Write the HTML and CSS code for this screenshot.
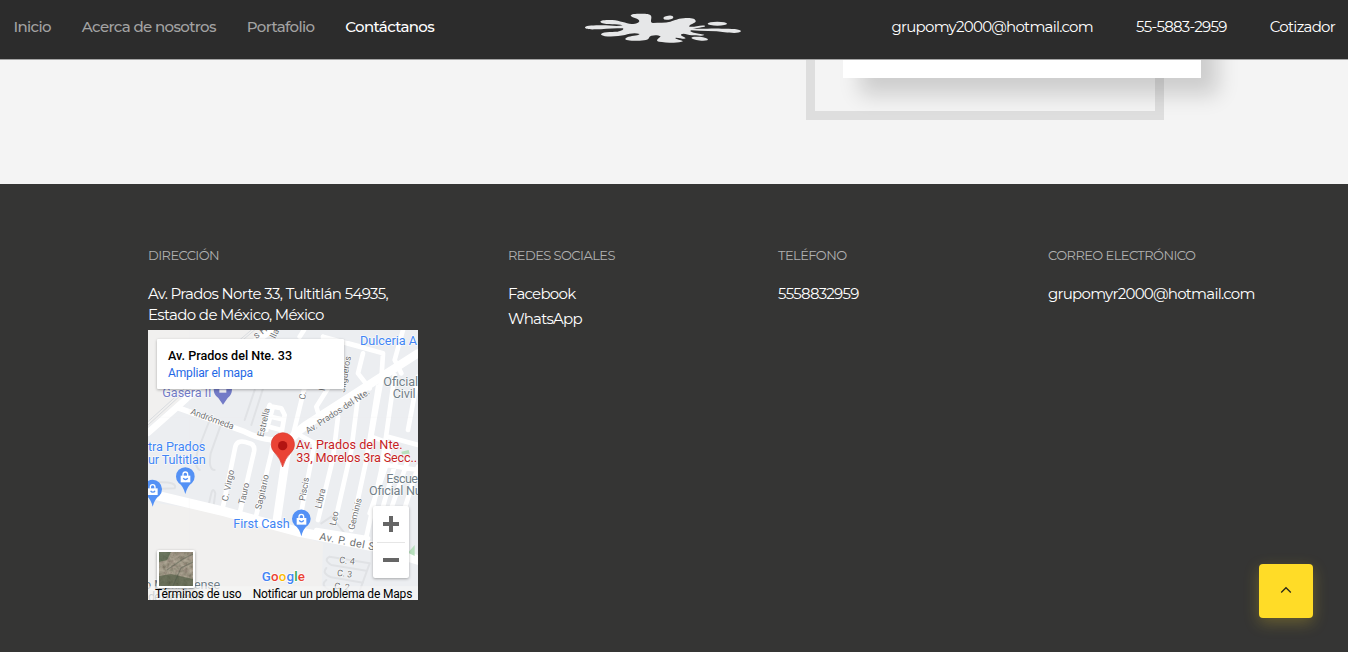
FILE: index.html
```
<!DOCTYPE html>
<html lang="es">
<head>
<meta charset="utf-8">
<title>Contáctanos</title>
<link rel="stylesheet" href="styles.css">
</head>
<body>
<header class="navbar">
  <nav class="menu">
    <a class="link">Inicio</a>
    <a class="link">Acerca de nosotros</a>
    <a class="link">Portafolio</a>
    <a class="link active">Contáctanos</a>
  </nav>
  <svg class="logo" viewBox="0 0 570 177" fill="#e6e7e8">
    <path d="M45 82C50 75 72 77 96 76C119 76 141 81 158 76C142 71 110 75 95 69C82 60 107 59 127 60C151 62 166 70 185 72C194 73 205 71 208 64C208 54 187 55 182 47C182 40 208 41 220 41C234 41 243 43 244 50C245 58 239 68 249 69C266 67 285 69 301 65C318 61 319 57 341 55C359 53 379 55 377 65C372 71 355 74 358 80C374 82 390 74 405 77C409 81 385 83 368 85C390 89 420 84 455 86C483 86 513 86 513 94C508 101 484 99 464 97C433 92 396 94 364 91C352 96 384 101 403 104C397 110 381 106 365 106C353 104 340 98 334 103C328 108 345 110 347 115C342 119 326 112 317 113C312 117 334 119 339 124C327 131 284 127 267 125C253 122 268 115 272 109C264 104 241 104 237 113C235 123 204 122 185 122C169 122 159 118 172 112C181 107 203 108 209 102C194 98 178 101 165 105C142 110 103 112 93 104C93 94 123 96 143 95C153 93 163 89 159 85C129 83 104 87 77 88C62 89 44 88 45 82Z"/>
    <ellipse cx="295" cy="53" rx="15" ry="6" transform="rotate(-7 295 53)"/>
    <ellipse cx="442" cy="71" rx="29" ry="6"/>
    <ellipse cx="389" cy="116" rx="25" ry="5.500" transform="rotate(6 389 116)"/>
  </svg>
  <div class="contact">
    <a>grupomy2000@hotmail.com</a>
    <a>55-5883-2959</a>
    <a>Cotizador</a>
  </div>
</header>
<main class="section">
  <div class="frame"><div class="card"></div></div>
</main>
<footer class="footer">
  <section class="col wide">
    <h2>DIRECCIÓN</h2>
    <p>Av. Prados Norte 33, Tultitlán 54935,<br>Estado de México, México</p>
    <div class="map">
      <svg class="streets" viewBox="0 0 810 810">
        <rect width="810" height="810" fill="#eceef1"/>
        <path d="M0 0H360L220 105L0 290ZM0 515L200 545L380 595L525 640L520 810H0Z" fill="#f1f0ef"/>
        <g class="minor">
          <path d="M185 270L150 360Q135 410 155 420M222 275L188 370Q180 420 200 420M0 470L30 457Q90 455 80 475L0 478M182 525L190 490Q195 470 202 490L195 540M320 180L290 270M350 160L310 285M545 680L665 700L625 810M545 680Q525 690 550 705L655 722M535 714Q520 730 550 742L645 758M535 750Q515 765 545 780L630 794M520 580L550 560L590 610"/>
        </g>
        <g class="road">
          <path d="M225 530L262 350Q268 325 305 340Q322 345 318 365L275 550M325 555L370 370L375 335M360 285L375 230L400 235L410 255L395 340M365 225Q350 260 355 300M368 260L402 268M362 290L400 300M435 315L480 130M460 545L500 340L460 318M510 570L555 385L570 260M560 580L610 360L630 200M610 600L655 390L690 170M655 620L700 420L740 135M505 600L660 625M665 550L715 405L725 340L670 320L700 150L705 70L525 20M645 70L630 130L665 175M455 20L468 0M600 40L640 50M525 20L540 175L505 230L515 265M765 0L740 90L760 130M810 345L720 320M715 405L810 420M730 535L780 390M770 535L810 410M705 530L745 390M780 300L810 140"/>
        </g>
        <path class="highway" d="M0 308L105 215L230 100L370 0"/>
        <path class="edge" d="M0 275L210 85L310 0M0 285L225 80L320 0"/>
        <path class="road mid" d="M95 235L290 305Q340 330 385 330"/>
        <path class="road main" d="M385 580L420 340Q440 310 475 285L810 70"/>
        <path class="road big" d="M0 490L230 545L450 605L680 650L810 690"/>
        <path d="M760 365L782 360L785 371L762 373ZM780 668L800 645V678Z" fill="#b8e0bd"/>
        <path d="M124 0V810M0 262H810" stroke="#e6e7e9" opacity=".6"/>
        <g class="street-name">
          <text transform="translate(325 28) rotate(-38)" font-size="30">s H</text>
          <text transform="translate(382 27) rotate(-65)">lla</text>
          <text transform="translate(126 252) rotate(20)" textLength="136">Andrómeda</text>
          <text transform="translate(346 322) rotate(-77)" textLength="88">Estrella</text>
          <text transform="translate(471 210) rotate(-80)">C. M</text>
          <text transform="translate(530 184) rotate(-80)">M</text>
          <text transform="translate(590 188) rotate(-80)" textLength="110">Jilgueros</text>
          <text transform="translate(480 312) rotate(-33)" textLength="223">Av. Prados del Nte.</text>
          <text transform="translate(239 515) rotate(-78)" textLength="96">C. Virgo</text>
          <text transform="translate(289 525) rotate(-77)" textLength="66">Tauro</text>
          <text transform="translate(339 540) rotate(-77)" textLength="107">Sagitario</text>
          <text transform="translate(471 514) rotate(-80)" textLength="71">Piscis</text>
          <text transform="translate(519 537) rotate(-77)" textLength="61">Libra</text>
          <text transform="translate(563 588) rotate(-78)" textLength="43">Leo</text>
          <text transform="translate(618 601) rotate(-76)" textLength="97">Geminis</text>
          <text class="avenue" transform="translate(513 629) rotate(11)" textLength="168">Av. P. del S</text>
          <text transform="translate(573 698) rotate(7)" textLength="47">C. 4</text>
          <text transform="translate(566 737) rotate(7)" textLength="46">C. 3</text>
          <text transform="translate(558 776) rotate(7)" textLength="46">C. 2</text>
        </g>
        <g class="poi">
          <g fill="#4285f4">
            <text x="636" y="46" textLength="171">Dulceria A</text>
            <text x="0" y="364" textLength="172">tra Prados</text>
            <text x="0" y="402" textLength="173">ur Tultitlan</text>
            <text x="256" y="594" textLength="169">First Cash</text>
          </g>
          <g fill="#718088">
            <text x="706" y="168" textLength="104">Oficial</text>
            <text x="734" y="205" textLength="69">Civil</text>
            <text x="715" y="459" textLength="95">Escue</text>
            <text x="663" y="496" textLength="158">Oficial Nu</text>
            <text x="-12" y="777" textLength="229">o Mexiquense</text>
            <text x="0" y="812" textLength="170">de Bienestar</text>
          </g>
          <text x="43" y="200" fill="#737bc7" textLength="147">Gasera II</text>
          <g fill="#c5221f">
            <text x="444" y="357" textLength="320">Av. Prados del Nte.</text>
            <text x="445" y="395" textLength="362">33, Morelos 3ra Secc..</text>
          </g>
        </g>
        <path d="M197 177H252Q252 195 239 204L225 224L211 204Q197 195 197 177Z" fill="#737bc7"/>
        <path d="M214 178V188H235V178Z" fill="#f0f1f4"/>
        <g id="shop">
          <path d="M112 492Q106 468 92 459A28 28 0 1 1 132 459Q118 468 112 492Z" fill="#5491f5"/>
          <path d="M98 437H127V457H98Z" fill="#fff"/>
          <path d="M105 438V433A7 7 0 0 1 119 433V438" fill="none" stroke="#fff" stroke-width="4"/>
          <path d="M106 444A7 7 0 0 0 119 444" fill="none" stroke="#5491f5" stroke-width="4"/>
        </g>
        <use href="#shop" x="-98" y="38"/>
        <use href="#shop" x="348" y="127"/>
        <path d="M404 411Q397 385 381 369A35 35 0 1 1 428 369Q411 385 404 411Z" fill="#ea4335" stroke="#d63b30" stroke-width="2"/>
        <circle cx="404" cy="347" r="14" fill="#b31412"/>
        <text class="google" x="341" y="752" textLength="130"><tspan fill="#4285f4">G</tspan><tspan fill="#ea4335">o</tspan><tspan fill="#fbbc04">o</tspan><tspan fill="#4285f4">g</tspan><tspan fill="#34a853">l</tspan><tspan fill="#ea4335">e</tspan></text>
        <path d="M0 769H810V810H0Z" fill="#f5f5f5" opacity=".7"/>
        <text class="terms" x="21" y="803" textLength="260">Términos de uso</text>
        <text class="terms" x="314" y="803" textLength="479">Notificar un problema de Maps</text>
      </svg>
      <div class="place"><b>Av. Prados del Nte. 33</b><span>Ampliar el mapa</span></div>
      <svg class="satellite" viewBox="0 0 34 34">
        <filter id="grain"><feTurbulence type="fractalNoise" baseFrequency=".24" numOctaves="4" seed="8"/><feColorMatrix values=".65 .2 0 0 .04 .55 .3 0 0 .01 .5 .2 0 0 0 0 0 0 0 1"/></filter>
        <rect width="34" height="34" fill="#776b59"/>
        <rect width="34" height="34" filter="url(#grain)" opacity=".6"/>
        <path d="M0 24L12 22L34 27V34H0Z" fill="#4d5940" opacity=".65"/>
        <path d="M0 0H12L8 8L0 10Z" fill="#40583c" opacity=".6"/>
        <path d="M8 18L24 7L34 2M14 34L22 16L34 10" fill="none" stroke="#455044" stroke-width="1.200" opacity=".4"/>
      </svg>
      <div class="zoom"><i class="plus"></i><i class="minus"></i></div>
    </div>
  </section>
  <section class="col">
    <h2>REDES SOCIALES</h2>
    <a>Facebook</a>
    <a>WhatsApp</a>
  </section>
  <section class="col">
    <h2>TELÉFONO</h2>
    <a>5558832959</a>
  </section>
  <section class="col">
    <h2>CORREO ELECTRÓNICO</h2>
    <a>grupomyr2000@hotmail.com</a>
  </section>
</footer>
<button class="top" aria-label="Subir"><svg viewBox="0 0 12 8"><path d="M1.200 6.500L6 1.700L10.800 6.500" fill="none" stroke="#292719" stroke-width="1.300"/></svg></button>
</body>
</html>
```
FILE: styles.css
```
* { box-sizing: border-box; }
body {
  margin: 0;
  height: 652px;
  overflow: hidden;
  background: #f4f4f4;
  font-family: Montserrat, "Open Sans", sans-serif;
  font-size: 15px;
  letter-spacing: -0.05em;
  color: #fff;
}
.navbar {
  position: relative;
  z-index: 2;
  display: grid;
  grid-template-columns: 1fr 190px 1fr;
  height: 60px;
  background: #2c2c2c;
  border-bottom: 1px solid #a5a5a5;
}
.menu, .contact { display: flex; height: 52px; align-items: center; white-space: nowrap; }
.menu { gap: 31px; padding-left: 13.5px; letter-spacing: -0.043em; }
.link { color: #a3a3a3; font-weight: 500; }
.link.active { color: #fff; }
.contact { justify-content: flex-end; gap: 43.2px; padding-right: 13px; }
.logo { display: block; width: 190px; height: 59px; margin-left: -9px; }
.section { display: flow-root; height: 124px; padding-left: 806px; }
.frame {
  display: flow-root;
  width: 358px;
  height: 60.4px;
  padding-left: 28px;
  border: 9px solid #dedede;
  border-top: 0;
}
.card {
  width: 358px;
  height: 218px;
  margin-top: -200px;
  background: #fff;
  box-shadow: 17px 17px 20px rgba(0, 0, 0, .16);
}
.footer {
  position: relative;
  display: flex;
  height: 468px;
  padding: 63px 0 0 148px;
  background: #353534;
}
.col { display: flex; flex-direction: column; width: 270px; }
.wide { width: 360px; }
.col h2 {
  margin: 0 0 19px;
  font-size: 13px;
  line-height: 17px;
  font-weight: 400;
  letter-spacing: -0.043em;
  color: #b0b0b0;
}
.col p { margin: 0 0 5px; line-height: 21px; letter-spacing: -0.043em; }
.col a { line-height: 21px; margin-bottom: 4px; }
.map {
  position: relative;
  width: 270px;
  height: 270px;
  overflow: hidden;
  font-family: Roboto, sans-serif;
  letter-spacing: 0;
}
.streets { display: block; width: 270px; height: 270px; }
.minor, .road, .highway, .edge { fill: none; stroke-linecap: round; stroke-linejoin: round; }
.minor { stroke: #e0e2e5; stroke-width: 6; }
.road { stroke: #fff; stroke-width: 14; }
.mid { stroke-width: 17; }
.main { stroke-width: 25; }
.big { stroke-width: 29; }
.highway { stroke: #fff; stroke-width: 20; }
.edge { stroke: #d9dce0; stroke-width: 3; }
.street-name { fill: #6f7173; font-size: 27px; stroke: #fff; stroke-width: 3px; paint-order: stroke; }
.avenue { font-size: 32px; }
.poi { font-size: 38px; stroke: #fff; stroke-width: 3px; paint-order: stroke; }
.google { font-size: 40px; font-weight: 500; stroke: #fff; stroke-width: 4px; paint-order: stroke; }
.terms { font-size: 36px; fill: #000; }
.place {
  position: absolute;
  top: 9px;
  left: 9px;
  width: 187px;
  height: 50px;
  padding: 8px 11px;
  background: #fff;
  color: #000;
  font-size: 12px;
  line-height: 17px;
  box-shadow: 0 1px 3px rgba(0, 0, 0, .3);
  border-radius: 1px;
}
.place b, .place span { display: block; white-space: nowrap; }
.place b { font-size: 12.6px; font-weight: 500; }
.place span { margin-top: 1px; color: #2468e6; letter-spacing: -0.14px; }
.satellite {
  position: absolute;
  left: 9px;
  top: 220px;
  width: 38px;
  height: 38px;
  border: 2px solid #fff;
  border-radius: 2px;
  box-shadow: 0 1px 3px rgba(0, 0, 0, .4);
}
.zoom {
  position: absolute;
  left: 225px;
  top: 176px;
  display: grid;
  width: 36px;
  height: 72px;
  place-items: center;
  background: linear-gradient(#e6e6e6, #e6e6e6) center / 28px 1px no-repeat #fff;
  border-radius: 2px;
  box-shadow: 0 1px 3px rgba(0, 0, 0, .3);
}
.plus, .minus { width: 16px; height: 16px; background: linear-gradient(#666, #666) center / 16px 4px no-repeat; }
.plus { background: linear-gradient(#666, #666) center / 16px 4px no-repeat, linear-gradient(#666, #666) center / 4px 16px no-repeat; }
.top {
  position: absolute;
  left: 1259px;
  top: 564px;
  display: grid;
  width: 54px;
  height: 54px;
  padding: 0 0 3px;
  place-items: center;
  border: 0;
  border-radius: 4px;
  background: #ffdc27;
  box-shadow: 0 5px 15px rgba(255, 220, 39, .25);
}
.top svg { width: 12px; height: 8px; }
```
